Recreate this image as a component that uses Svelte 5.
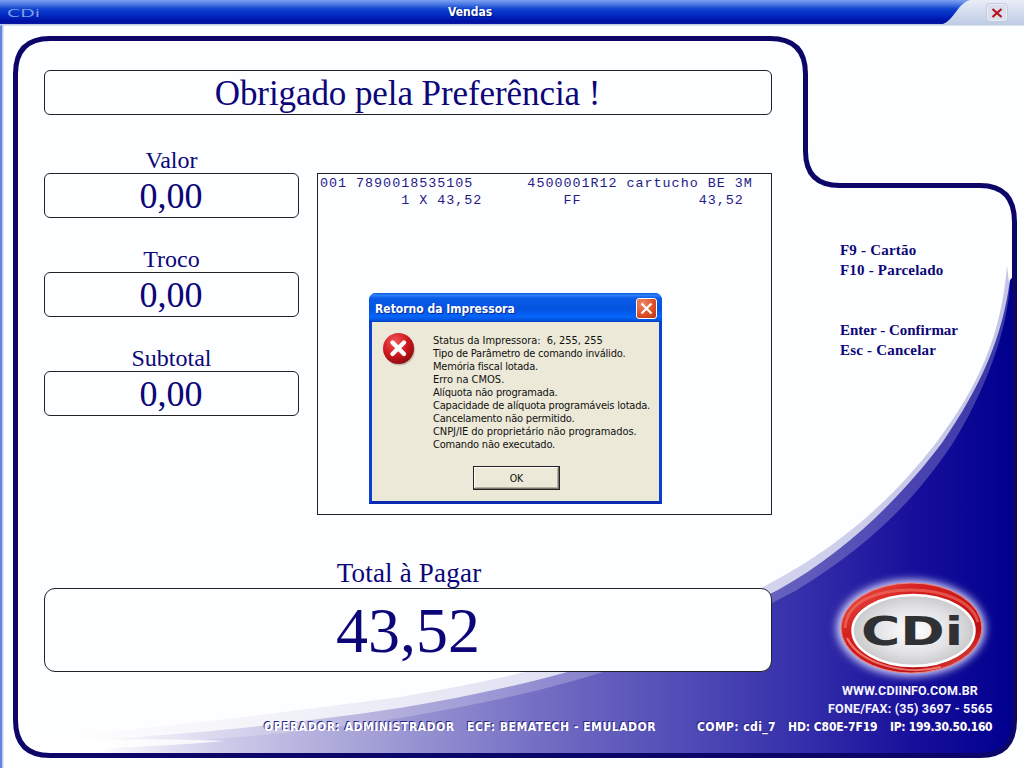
<script>
  const amounts = [
    { label: 'Valor', value: '0,00' },
    { label: 'Troco', value: '0,00' },
    { label: 'Subtotal', value: '0,00' }
  ];
  const receipt = [
    '001 7890018535105      4500001R12 cartucho BE 3M',
    '         1 X 43,52         FF             43,52'
  ];
  const messages = [
    'Status da Impressora:  6, 255, 255',
    'Tipo de Parâmetro de comando inválido.',
    'Memória fiscal lotada.',
    'Erro na CMOS.',
    'Alíquota não programada.',
    'Capacidade de alíquota programáveis lotada.',
    'Cancelamento não permitido.',
    'CNPJ/IE do proprietário não programados.',
    'Comando não executado.'
  ];
  const frame =
    'M50 38.5H770Q805.5 38.5 805.5 74V151Q805.5 185.5 840 185.5H980Q1014.5 185.5 1014.5 222V720Q1014.5 755.5 980 755.5H50Q15.5 755.5 15.5 720V74Q15.5 38.5 50 38.5Z';
</script>

<div class="window">
  <svg class="backdrop" width="1024" height="768" viewBox="0 0 1024 768" aria-hidden="true">
    <defs>
      <linearGradient id="bar" x1="0" y1="0" x2="0" y2="1">
        <stop offset="0" stop-color="#7aa2f4" />
        <stop offset=".13" stop-color="#5a84e8" />
        <stop offset=".38" stop-color="#0e42cf" />
        <stop offset=".68" stop-color="#0024be" />
        <stop offset=".9" stop-color="#000f9f" />
        <stop offset="1" stop-color="#0618a8" />
      </linearGradient>
      <linearGradient id="corner" x1="0" y1="0" x2="0" y2="1">
        <stop offset="0" stop-color="#e9edf7" />
        <stop offset="1" stop-color="#bccae4" />
      </linearGradient>
      <linearGradient id="blue" gradientUnits="userSpaceOnUse" x1="18" y1="0" x2="1014" y2="0">
        <stop offset=".08" stop-color="#fff" />
        <stop offset=".2" stop-color="#cfcdea" />
        <stop offset=".38" stop-color="#9c98d3" />
        <stop offset=".53" stop-color="#726cc3" />
        <stop offset=".68" stop-color="#4e49b5" />
        <stop offset=".79" stop-color="#342eaa" />
        <stop offset=".9" stop-color="#170f9b" />
        <stop offset="1" stop-color="#00008e" />
      </linearGradient>
      <linearGradient id="pale" gradientUnits="userSpaceOnUse" x1="60" y1="0" x2="1010" y2="0">
        <stop offset="0" stop-color="#fff" />
        <stop offset=".3" stop-color="#eeeef7" />
        <stop offset=".55" stop-color="#dedff2" />
        <stop offset="1" stop-color="#c3c4e6" />
      </linearGradient>
      <clipPath id="inside"><path d={frame} /></clipPath>
    </defs>
    <rect width="1024" height="768" fill="#fdfeff" />
    <rect y="24" width="2.5" height="744" fill="#6584dc" />
    <rect x="2.5" y="24" width="1" height="744" fill="#c5d2f2" />
    <rect width="1024" height="25.5" fill="url(#corner)" />
    <path d="M0 0H970C958 3 954 20 943 24H0Z" fill="url(#bar)" />
    <g clip-path="url(#inside)">
      <path d="M40 738C160 728 280 713 400 697C530 675 650 645 763 587C850 542 900 489 936 443C980 384 1001 335 1007 266L1010 290V740H400L40 748Z" fill="url(#pale)" />
      <path d="M30 742C130 740 260 729 400 708C520 688 640 660 778 590C850 550 905 492 942 443C982 385 1003 335 1010 280L1017 272V760H30Z" fill="url(#blue)" />
      <path d="M30 742C130 740 260 729 400 708C520 688 640 660 778 590C850 550 905 492 942 443C982 385 1003 335 1010 280C1009 330 983 395 953 443C915 500 870 545 797 590C650 670 520 698 400 718C270 738 150 745 30 748Z" fill="#fff" opacity=".22" />
      <path d="M50 741C110 740 160 738 225 741C170 746 110 748 50 750Z" fill="#fff" opacity=".8" />
    </g>
    <path d={frame} fill="none" stroke="#0b0668" stroke-width="5" />
  </svg>

  <header>
    <svg class="mini" width="34" height="12" viewBox="0 0 34 12">
      <text x="0" y="10" font-size="11" textLength="33" lengthAdjust="spacingAndGlyphs">CDi</text>
    </svg>
    <h1>Vendas</h1>
    <button class="exit" aria-label="Fechar">
      <svg width="12" height="10" viewBox="0 0 12 10"><path d="M1.5 1L10.5 9M10.5 1L1.5 9" stroke="#b5101c" stroke-width="2.2" /></svg>
    </button>
  </header>

  <main>
    <div class="sale">
      <div class="box greeting">Obrigado pela Preferência !</div>
      <div class="middle">
        <div class="amounts">
          {#each amounts as item}
            <div class="amount">
              <div class="label">{item.label}</div>
              <div class="box value">{item.value}</div>
            </div>
          {/each}
        </div>
        <div class="receipt">{#each receipt as line}<div>{line}</div>{/each}</div>
      </div>
      <div class="label total-label">Total à Pagar</div>
      <div class="box total">43,52</div>
    </div>
    <aside>
      <div class="keys">
        <p>F9 - Cartão</p>
        <p>F10 - Parcelado</p>
        <p class="spaced">Enter - Confirmar</p>
        <p>Esc - Cancelar</p>
      </div>
      <div class="brand">
        <svg width="170" height="116" viewBox="826 570 170 116">
          <defs>
            <filter id="glow" x="-20%" y="-25%" width="140%" height="150%"><feGaussianBlur stdDeviation="4" /></filter>
            <linearGradient id="red" x1="0" y1="0" x2="1" y2="1">
              <stop offset="0" stop-color="#ef5a50" />
              <stop offset=".3" stop-color="#d5221f" />
              <stop offset=".75" stop-color="#bd1013" />
              <stop offset="1" stop-color="#f27368" />
            </linearGradient>
            <radialGradient id="silver">
              <stop offset="0" stop-color="#fff" />
              <stop offset=".65" stop-color="#e2e2e5" />
              <stop offset="1" stop-color="#c9cacc" />
            </radialGradient>
          </defs>
          <ellipse cx="911" cy="628" rx="74" ry="48" fill="#dcdcff" filter="url(#glow)" />
          <ellipse cx="911.5" cy="628" rx="70.5" ry="45" fill="url(#red)" stroke="#ea8580" />
          <path d="M845 628C847 600 879 590 911 590S972 601 978 622" fill="none" stroke="#f47468" stroke-width="3" opacity=".6" />
          <path d="M847 638C860 664 905 676 941 667" fill="none" stroke="#fa9a8e" stroke-width="2" opacity=".7" />
          <ellipse cx="913.5" cy="630.5" rx="61" ry="35.5" fill="url(#silver)" stroke="#fff" stroke-width="2.5" />
          <text class="logo" x="861" y="645" font-size="38.5" textLength="102" lengthAdjust="spacingAndGlyphs">CDi</text>
        </svg>
        <p class="site">WWW.CDIINFO.COM.BR</p>
        <p class="phone">FONE/FAX: (35) 3697 - 5565</p>
      </div>
    </aside>
  </main>

  <footer>
    <span class="operator">OPERADOR: ADMINISTRADOR</span>
    <span class="ecf">ECF: BEMATECH - EMULADOR</span>
    <span class="comp">COMP: cdi_7</span>
    <span class="hd">HD: C80E-7F19</span>
    <span class="ip">IP: 199.30.50.160</span>
  </footer>

  <div class="dialog" role="alertdialog" aria-labelledby="dialog-title">
    <div class="dialog-bar">
      <span id="dialog-title">Retorno da Impressora</span>
      <button class="dialog-close" aria-label="Fechar">
        <svg width="13" height="13" viewBox="0 0 13 13"><path d="M1.5 1.5L11.5 11.5M11.5 1.5L1.5 11.5" stroke="#fff" stroke-width="2.2" /></svg>
      </button>
    </div>
    <div class="dialog-body">
      <svg class="error" width="34" height="34" viewBox="0 0 34 34">
        <defs>
          <radialGradient id="err" cx=".38" cy=".28" r=".75">
            <stop offset="0" stop-color="#f0575a" />
            <stop offset=".55" stop-color="#d01a20" />
            <stop offset="1" stop-color="#8e0a0e" />
          </radialGradient>
        </defs>
        <circle cx="17.5" cy="18" r="15.5" fill="#8c8880" opacity=".45" />
        <circle cx="16.5" cy="16.5" r="15.5" fill="url(#err)" />
        <path d="M10.5 10.5L22 22M22 10.5L10.5 22" stroke="#fff" stroke-width="4.4" stroke-linecap="round" />
      </svg>
      <div class="messages">{#each messages as line}<div>{line}</div>{/each}</div>
    </div>
    <button class="ok">OK</button>
  </div>
</div>

<style>
  :global(body) { margin: 0; overflow: hidden; }
  .window { position: relative; width: 1024px; height: 768px; overflow: hidden; display: flex; flex-direction: column; color: #0c0678; font-family: "Liberation Serif", serif; }
  .backdrop { position: absolute; inset: 0; }
  .backdrop ~ * { position: relative; }
  svg { display: block; }
  p, h1 { margin: 0; }
  button { padding: 0; border: 0; font: inherit; }

  header { display: grid; grid-template-columns: 60px 1fr 60px; align-items: center; height: 25px; box-sizing: border-box; padding: 0 15px 0 7px; }
  .mini text { font-family: "DejaVu Sans", sans-serif; fill: #7f9de9; }
  h1 { padding: 0 0 0 381px; font: bold 12px/25px "DejaVu Sans Condensed", "DejaVu Sans", sans-serif; color: #fff; text-shadow: 1px 1px #00107a; }
  .exit { justify-self: end; width: 22px; height: 19px; margin-right: 1px; border-radius: 4px; background: #d9dfec; border: 1px solid #c3cbdc; display: grid; place-items: center; box-shadow: inset 0 0 0 1px #e9edf5; }

  main { display: flex; height: 683px; }
  .sale { width: 728px; margin-left: 44px; padding-top: 45px; }
  .box { box-sizing: border-box; border: 1px solid #222; border-radius: 6px; background: #fdfeff; text-align: center; white-space: nowrap; }
  .greeting { height: 45px; font-size: 35px; line-height: 45px; padding-right: 1px; letter-spacing: -.08px; }
  .middle { display: flex; gap: 18px; height: 400px; padding-top: 33px; box-sizing: border-box; }
  .amounts { width: 255px; }
  .amount { height: 99px; }
  .label { height: 25px; font-size: 24px; line-height: 25px; text-align: center; }
  .value { height: 45px; font-size: 36px; line-height: 45px; padding-right: 1px; }
  .receipt { width: 455px; height: 342px; margin-top: 25px; box-sizing: border-box; border: 1px solid #222; padding: 1px 0 0 2px; font: 13.4px/17px "Liberation Mono", monospace; letter-spacing: .98px; white-space: pre; color: #241a8a; }
  .total-label { height: 26px; margin-top: 47px; padding-left: 2px; font-size: 27px; line-height: 23px; letter-spacing: .2px; }
  .total { height: 84px; border-radius: 11px; font-size: 64px; line-height: 83px; }

  aside { width: 200px; margin-left: 50px; display: flex; flex-direction: column; }
  .keys { padding: 215px 0 0 18px; font-weight: bold; font-size: 15px; line-height: 20px; letter-spacing: .2px; }
  .spaced { margin-top: 40px; letter-spacing: 0; }
  .brand { margin-top: 210px; }
  .brand p { color: #f5f5ff; font: bold 12.5px/18px Roboto, sans-serif; white-space: nowrap; }
  .brand svg { margin-left: 4px; }
  .logo { font-family: "DejaVu Sans", sans-serif; font-weight: bold; fill: #303134; }
  .brand .site { padding-left: 20px; margin-top: -4px; letter-spacing: .12px; }
  .brand .phone { padding-left: 6px; letter-spacing: .2px; }

  footer { display: flex; padding: 10px 0 0 264px; font: bold 12px/18px "DejaVu Sans Condensed", "DejaVu Sans", sans-serif; color: #fff; white-space: nowrap; text-shadow: -1px -1px #2c2684; }
  .operator { width: 203px; letter-spacing: .5px; }
  .ecf { width: 230px; letter-spacing: .54px; }
  .comp { width: 91px; letter-spacing: .4px; }
  .hd { width: 102px; letter-spacing: -.1px; }
  .ip { letter-spacing: -.3px; }

  .window .dialog { position: absolute; left: 369px; top: 293px; width: 293px; height: 211px; box-sizing: border-box; border: 3px solid #0a3fd0; border-top: 0; border-bottom-color: #0a2bb0; border-radius: 7px 7px 0 0; background: #ece9d8; color: #111; font: 11px/13px "DejaVu Sans Condensed", "DejaVu Sans", sans-serif; }
  .dialog-bar { height: 29px; margin: 0 -3px; padding: 0 5px 0 6px; border-radius: 7px 7px 0 0; display: flex; align-items: center; justify-content: space-between; color: #fff; font-weight: bold; font-size: 12px; text-shadow: 1px 1px #0a2a90; background: linear-gradient(#0b4fdc, #2f82fa 7%, #0a5ce6 18%, #0353e0 55%, #0565fa 82%, #0350d8 95%, #003bb8); }
  .dialog-bar span { padding-top: 4px; }
  .dialog-close { width: 21px; height: 21px; margin-top: 2px; box-sizing: border-box; border: 1px solid #fff; border-radius: 3px; display: grid; place-items: center; background: radial-gradient(circle at 30% 25%, #ec8a6c, #dc4c24 60%, #b93412); }
  .dialog-body { display: flex; padding: 10px 0 0 10px; }
  .messages { padding: 2px 0 0 17px; white-space: pre; letter-spacing: -.2px; }
  .messages div:first-child, .messages div:nth-child(8) { letter-spacing: -.06px; }
  .messages div:nth-child(4) { letter-spacing: 0; }
  .ok { display: block; width: 87px; height: 24px; margin: 15px 0 0 101px; border: 1px solid #222; box-shadow: inset -1px -1px #77736a, inset 1px 1px #fff, inset -2px -2px #b4b0a2; background: #ece9d8; text-align: center; color: #111; font-size: 10.5px; }
</style>
